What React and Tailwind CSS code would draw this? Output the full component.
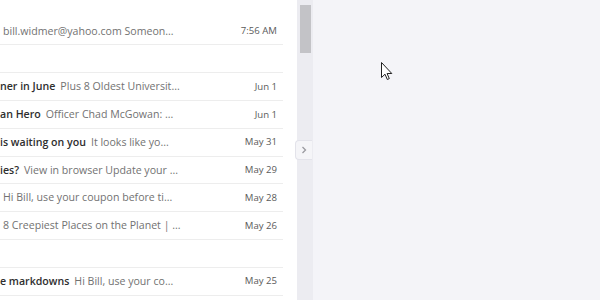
import React from "react";

const rows = [
  { bold: "", prev: "bill.widmer@yahoo.com Someon...", date: "7:56 AM", pad: 3 },
  null,
  { bold: "ner in June", prev: "Plus 8 Oldest Universit...", date: "Jun 1" },
  { bold: "an Hero", prev: "Officer Chad McGowan: ...", date: "Jun 1" },
  { bold: "is waiting on you", prev: "It looks like yo...", date: "May 31" },
  { bold: "ies?", prev: "View in browser Update your ...", date: "May 29" },
  { bold: "", prev: "Hi Bill, use your coupon before ti...", date: "May 28", pad: 3 },
  { bold: "", prev: "8 Creepiest Places on the Planet | ...", date: "May 26", pad: 3 },
  null,
  { bold: "e markdowns", prev: "Hi Bill, use your co...", date: "May 25" },
];

function Row({ r }) {
  if (!r) return <div className="h-[27.8px] border-b border-[#ededed]" />;
  return (
    <div className="h-[27.8px] border-b border-[#ededed] flex items-center pt-[1px] pr-[6px] whitespace-nowrap overflow-hidden">
      <div className="flex-1 flex items-center min-w-0" style={{ paddingLeft: r.pad || 0 }}>
        {r.bold && <span className="font-semibold text-[#2e2e2e] mr-[5px]">{r.bold}</span>}
        <span className="text-[#727272]">{r.prev}</span>
      </div>
      <span className="text-[#5a5a5a] text-[9.6px]">{r.date}</span>
    </div>
  );
}

export default function App() {
  return (
    <div className="w-[600px] h-[300px] flex bg-white overflow-hidden relative text-[10.6px]" style={{ fontFamily: '"Open Sans", "Noto Sans", sans-serif' }}>
      <div className="w-[297px] shrink-0 pt-[17.6px]">
        <div className="w-[283px]">
          {rows.map((r, i) => (
            <Row key={i} r={r} />
          ))}
        </div>
      </div>
      <div className="w-[16px] shrink-0 bg-[#ececf1] pt-[5px] pl-[3px] relative">
        <div className="w-[11px] h-[48px] bg-[#c3c3c7]" />
      </div>
      <div className="flex-1 bg-[#f4f4f8]" />
      <div className="absolute left-[295px] top-[140px] w-[17px] h-[20px] rounded-l-[4px] bg-[#f5f5f8] border border-r-0 border-[#e3e3ea] flex items-center justify-center">
        <svg width="6" height="8" viewBox="0 0 6 8">
          <path d="M1.5 1 L4.5 4 L1.5 7" fill="none" stroke="#9a9aa0" strokeWidth="1.3" />
        </svg>
      </div>
      <svg className="absolute left-[381px] top-[62px]" width="12" height="19" viewBox="0 0 12 19">
        <path d="M0.5 0.5 L0.5 15.5 L4 12.2 L6.3 17.5 L8.3 16.6 L6.1 11.5 L10.8 11.5 Z" fill="#fff" stroke="#222" strokeWidth="1" strokeLinejoin="round" />
      </svg>
    </div>
  );
}
